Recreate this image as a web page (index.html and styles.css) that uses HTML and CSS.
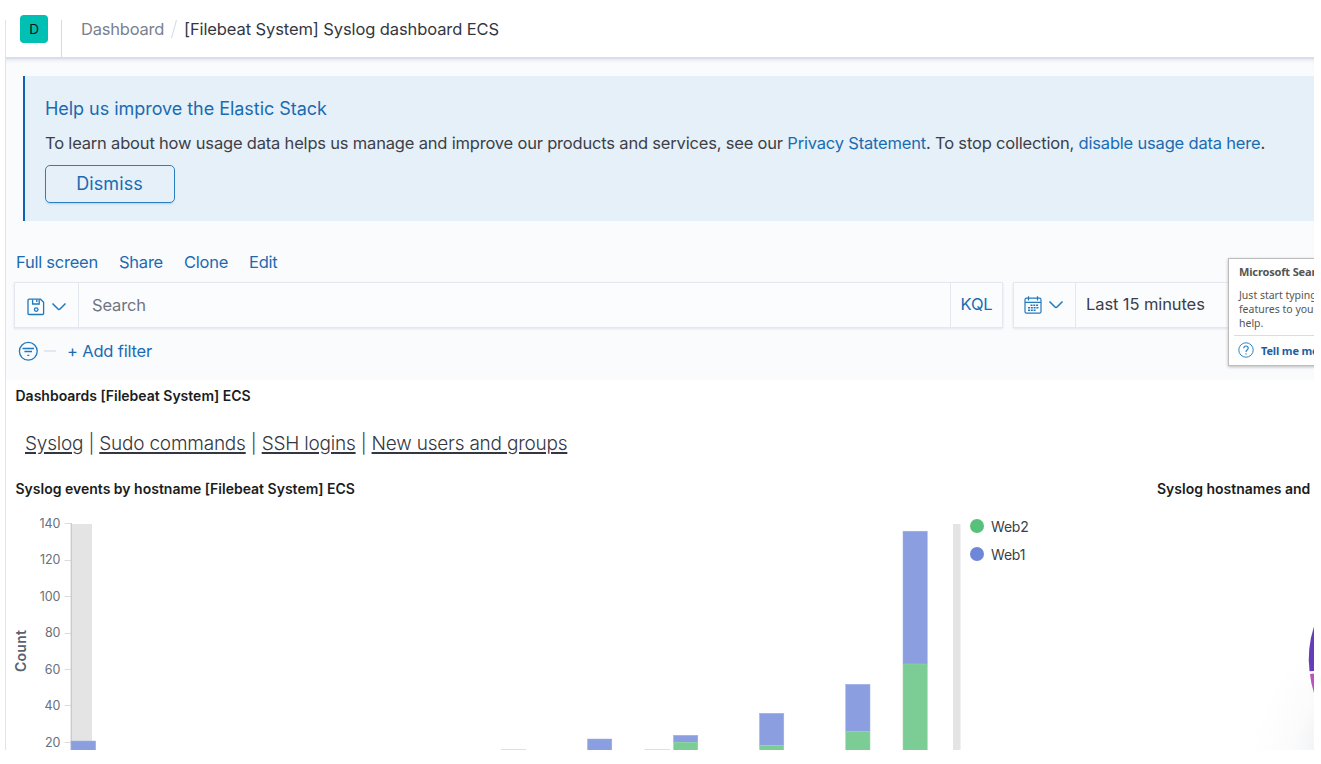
FILE: index.html
```html
<!DOCTYPE html>
<html lang="en">
<head>
<meta charset="utf-8">
<title>[Filebeat System] Syslog dashboard ECS</title>
<link rel="stylesheet" href="styles.css">
</head>
<body>
<div class="app">
  <header class="header">
    <div class="space"><span class="avatar">D</span></div>
    <nav class="crumbs"><span class="crumb-link">Dashboard</span><svg class="slash" width="8" height="20" viewBox="0 0 8 20"><path d="M1.500 19 6.500 1" stroke="#d3dae6" fill="none"/></svg><span class="crumb-current">[Filebeat System] Syslog dashboard ECS</span></nav>
  </header>
  <main class="content">
    <section class="callout">
      <h2 class="callout-title">Help us improve the Elastic Stack</h2>
      <p class="callout-text">To learn about how usage data helps us manage and improve our products and services, see our <a>Privacy Statement</a>. To stop collection, <a>disable usage data here</a>.</p>
      <button class="dismiss">Dismiss</button>
    </section>
    <nav class="menu"><a class="m-full">Full screen</a><a class="m-share">Share</a><a class="m-clone">Clone</a><a>Edit</a></nav>
    <div class="query">
      <div class="search-group">
        <div class="icon-cell">
          <svg width="18" height="18" viewBox="0 0 18 18" fill="none" stroke="#2078bd" stroke-width="1.300"><path d="M2 1.200H13.500L16.600 4.300V15.500Q16.600 16.500 15.600 16.500H2Q1 16.500 1 15.500V2.200Q1 1.200 2 1.200Z"/><path d="M5.600 1.500V6H12.200V1.500M9.800 1.500V4"/><circle cx="9.200" cy="11.600" r="1.800"/></svg>
          <svg width="16" height="10" viewBox="0 0 16 10" fill="none" stroke="#2078bd" stroke-width="1.500"><path d="M1.500 1.500 7 7Q8 8 9 7L14.500 1.500"/></svg>
        </div>
        <div class="search-input">Search</div>
        <div class="kql">KQL</div>
      </div>
      <div class="date-group">
        <div class="icon-cell date-cell">
          <svg width="18" height="18" viewBox="0 0 18 18" fill="none" stroke="#2078bd" stroke-width="1.200"><rect x="1" y="2.200" width="16" height="15" rx="1.500"/><path d="M1 6.300H17M4.500 .2V4.500M13.500 .2V4.500"/><path d="M6.500 9.200H14.500M4 11.700H14.500M4 14.200H12" stroke-width="1.600" stroke-dasharray="2 .8"/></svg>
          <svg width="16" height="10" viewBox="0 0 16 10" fill="none" stroke="#2078bd" stroke-width="1.500"><path d="M1.500 1.500 7 7Q8 8 9 7L14.500 1.500"/></svg>
        </div>
        <div class="date-text">Last 15 minutes</div>
      </div>
    </div>
    <div class="filters">
      <svg width="20" height="20" viewBox="0 0 20 20" fill="none" stroke="#2078bd" stroke-width="1.300"><circle cx="10.300" cy="10.300" r="8.900"/><path d="M4.500 7.500H16M6.400 10.500H14M9.300 14.300H11.300"/></svg>
      <span class="dash"></span>
      <a class="add">+ Add filter</a>
    </div>
  </main>
  <section class="dashboard">
    <h3 class="panel-title t-dash">Dashboards [Filebeat System] ECS</h3>
    <p class="links"><a>Syslog</a> | <a>Sudo commands</a> | <a>SSH logins</a> | <a>New users and groups</a></p>
    <div class="panels">
      <article class="events">
        <h3 class="panel-title t-events">Syslog events by hostname [Filebeat System] ECS</h3>
        <div class="chart-row">
          <svg class="chart" width="964" height="245" viewBox="6 505 964 245">
            <g class="ticks">
              <text x="60.500" y="528">140</text><text x="60.500" y="564.400">120</text><text x="60.500" y="600.900">100</text><text x="60.500" y="637.300">80</text><text x="60.500" y="673.700">60</text><text x="60.500" y="710.100">40</text><text x="60.500" y="746.500">20</text>
            </g>
            <path d="M64.500 523.500H71M64.500 560.500H71M64.500 596.500H71M64.500 633.500H71M64.500 669.500H71M64.500 705.500H71M64.500 742.500H71" stroke="#dcdcdc"/>
            <text class="axis" transform="translate(25.500 672) rotate(-90)" textLength="42">Count</text>
            <g fill="#e4e4e4"><rect x="71" y="524" width="21" height="226"/><rect x="953" y="524" width="7.500" height="226"/></g>
            <path d="M71.200 523V750" stroke="#bfbfbf"/>
            <g fill="#8b9ee0" stroke="#9fafe8" stroke-width=".5">
              <rect x="71" y="741" width="24.700" height="10"/><rect x="587.500" y="739" width="24.300" height="12"/><rect x="673.500" y="735.300" width="24.300" height="7"/><rect x="759.500" y="713.300" width="24.300" height="32"/><rect x="845.700" y="684.300" width="24.300" height="47"/><rect x="903" y="531.200" width="24.300" height="133"/>
            </g>
            <g fill="#7bcd95" stroke="#96d8aa" stroke-width=".5">
              <rect x="673.500" y="742.200" width="24.300" height="9"/><rect x="759.500" y="745.500" width="24.300" height="6"/><rect x="845.700" y="731.300" width="24.300" height="20"/><rect x="903" y="664" width="24.300" height="87"/>
            </g>
            <path d="M501 749.500H526M644.500 749.500H670" stroke="#d8def5"/>
          </svg>
          <ul class="legend"><li><i class="dot green"></i>Web2</li><li><i class="dot blue"></i>Web1</li></ul>
        </div>
      </article>
      <article class="hosts">
        <h3 class="panel-title t-hosts">Syslog hostnames and</h3>
        <svg class="pie" width="166" height="245" viewBox="1148 505 166 245">
          <defs><radialGradient id="shade" gradientUnits="userSpaceOnUse" cx="1419" cy="775" r="170"><stop offset=".6" stop-color="#f1f2f3"/><stop offset=".76" stop-color="#fbfbfc"/><stop offset="1" stop-color="#fff"/></radialGradient></defs>
          <rect x="1148" y="505" width="166" height="245" fill="url(#shade)"/>
          <path d="M1314 626.500A105 105 0 0 0 1309.500 671.300L1314 671Z" fill="#663db8"/>
          <path d="M1310 674 1314 673.400V693Q1310.700 683 1310 674Z" fill="#bc52bc"/>
        </svg>
      </article>
    </div>
  </section>
  <aside class="tooltip">
    <strong class="tip-title">Microsoft Search</strong>
    <p class="tip-text">Just start typing<br>features to you<br>help.</p>
    <div class="tip-more"><svg width="16" height="16" viewBox="0 0 16 16" fill="none" stroke="#2f86c5"><circle cx="8" cy="8" r="7.200"/><path d="M5.800 6.200Q5.800 4 8 4T10.200 6.200C10.200 7.800 8 7.800 8 10M8 11.300V12.500" stroke-width="1.200"/></svg><b>Tell me more</b></div>
  </aside>
</div>
</body>
</html>
```
FILE: styles.css
```css
* { box-sizing: border-box; }
body { margin: 0; background: #fff; color: #3c3f48; font-family: Inter, sans-serif; font-weight: 400; overflow: hidden; }
h2, h3, p, ul { margin: 0; padding: 0; }
svg { display: block; flex: none; }
.app { position: relative; width: 1309px; height: 750px; margin-left: 5px; overflow: hidden; white-space: nowrap; }
.app::before { content: ""; position: absolute; z-index: 2; left: 0; top: 20px; bottom: 0; width: 1px; background: #dfe3eb; }
.header { height: 59px; display: flex; border-bottom: 2px solid #d9deea; }
.space { width: 57px; padding: 15px 0 0 15px; background: linear-gradient(#d3dae6, #d3dae6) right 20px / 1px 37px no-repeat; }
.avatar { display: flex; align-items: center; justify-content: center; width: 28px; height: 28px; border-radius: 4px; background: #00bfb3; color: #111; font-size: 13.500px; }
.crumbs { display: flex; align-items: center; height: 58px; padding-left: 19px; font-size: 16.500px; letter-spacing: -.1px; }
.crumb-link { width: 83px; color: #7b818f; letter-spacing: -.22px; }
.slash { margin: 0 6px 0 6px; }
.crumb-current { color: #343741; }
.content { height: 321px; background: #fafbfd; box-shadow: inset 0 4px 4px -3px #dde1ea; padding: 17px 0 0 9px; }
.callout { margin-left: 9px; height: 145px; background: #e6f0f8; border-left: 2px solid #0d62b1; padding: 21px 0 0 20px; }
.callout-title { font-size: 18px; line-height: 24px; font-weight: 400; letter-spacing: -.04px; color: #1a6bb2; }
.callout-text { margin-top: 10px; font-size: 16.500px; line-height: 24px; letter-spacing: -.187px; }
a { color: #1a6bb2; }
.dismiss { display: block; margin-top: 10px; width: 130px; height: 38px; border: 1px solid #2a7fc0; border-radius: 5px; background: transparent; color: #1a6bb2; font: 400 18px/34px Inter, sans-serif; letter-spacing: .1px; padding: 0 1px 0 0; box-shadow: 0 2px 2px -1px #b9cfe2; }
.menu { display: flex; height: 61px; padding: 31px 0 0 2px; line-height: 21px; font-size: 16.500px; letter-spacing: -.24px; }
.m-full { width: 103px; }
.m-share { width: 65px; }
.m-clone { width: 65px; }
.query { display: flex; gap: 10px; height: 46px; }
.search-group, .date-group { display: flex; flex: none; height: 46px; border: 1px solid #e3e7f0; background: #fbfcfe; box-shadow: 0 1px 2px #dfe3ec; }
.search-group { width: 989px; }
.date-group { width: 320px; }
.icon-cell { display: flex; align-items: center; justify-content: center; gap: 6px; width: 64px; border-right: 1px solid #e3e7f0; padding: 4px 0 0 1px; flex: none; }
.date-cell { width: 62px; padding: 0 1px 0 0; }
.search-input { flex: 1; padding-left: 13px; line-height: 45px; font-size: 16.500px; color: #6f7583; letter-spacing: -.15px; }
.kql { width: 52px; border-left: 1px solid #e3e7f0; text-align: center; line-height: 43px; font-size: 16.500px; color: #1a6bb2; letter-spacing: -.2px; }
.date-text { padding-left: 10px; line-height: 43px; font-size: 16.500px; letter-spacing: -.1px; }
.filters { display: flex; align-items: center; height: 46px; padding-left: 4px; }
.dash { width: 12px; height: 2px; margin: 0 11px 0 6px; background: #e3e8f0; }
.add { font-size: 16.500px; letter-spacing: -.18px; }
.panel-title { font-size: 14px; font-weight: 600; line-height: 20px; color: #1a1c21; }
.dashboard { padding: 6px 0 0 1px; }
.t-dash, .t-events { padding-left: 9.500px; }
.links { margin-top: 23px; padding-left: 19px; height: 30px; line-height: 29px; font-size: 19px; font-weight: 300; letter-spacing: -.21px; }
.links a { color: #343741; text-decoration: underline; text-underline-offset: 2px; text-decoration-thickness: 1.500px; }
.panels { display: flex; margin-top: 20px; }
.events { width: 1142px; }
.chart-row { display: flex; margin-top: 6px; }
.chart text { font: 12.500px Inter, sans-serif; fill: #69707d; text-anchor: end; }
.chart .axis { font-size: 14px; font-weight: 600; text-anchor: start; fill: #5a6170; }
.legend { list-style: none; padding-top: 7px; font-size: 14px; letter-spacing: -.2px; }
.legend li { display: flex; align-items: center; height: 28px; }
.dot { width: 14px; height: 14px; margin-right: 7px; border-radius: 50%; }
.green { background: #57c17b; }
.blue { background: #6f87d8; }
.hosts { width: 166px; }
.t-hosts { padding-left: 9px; }
.pie { margin-top: 6px; }
.tooltip { position: absolute; left: 1223px; top: 258px; width: 160px; height: 108px; padding: 6px 0 0 5px; background: #fff; border: 1px solid #bdbdbd; box-shadow: 0 1px 3px #bbb; font-family: "Noto Sans", sans-serif; color: #555; }
.tip-title { display: block; padding-left: 5px; font-size: 11px; line-height: 14px; letter-spacing: -.15px; }
.tip-text { padding: 9px 0 5px 5px; font-size: 10.500px; line-height: 14px; }
.tip-more { display: flex; align-items: center; gap: 7px; height: 29px; padding-left: 4px; border-top: 1px solid #ddd; font-size: 11px; color: #1f5f9f; letter-spacing: -.15px; }
```
